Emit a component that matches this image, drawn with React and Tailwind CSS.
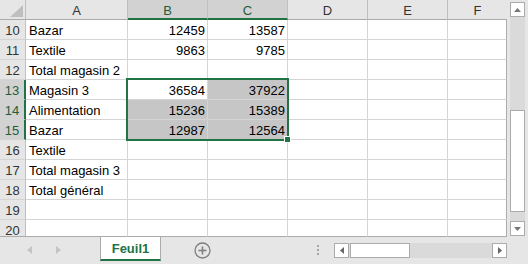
import React from 'react';

const COLS = [
  { k: 'A', w: 'w-[102px]' },
  { k: 'B', w: 'w-[80px]' },
  { k: 'C', w: 'w-[80px]' },
  { k: 'D', w: 'w-[80px]' },
  { k: 'E', w: 'w-[80px]' },
  { k: 'F', w: 'w-[59px]' },
];

const ROWS = [
  { n: 10, a: 'Bazar', b: '12459', c: '13587' },
  { n: 11, a: 'Textile', b: '9863', c: '9785' },
  { n: 12, a: 'Total magasin 2' },
  { n: 13, a: 'Magasin 3', b: '36584', c: '37922' },
  { n: 14, a: 'Alimentation', b: '15236', c: '15389' },
  { n: 15, a: 'Bazar', b: '12987', c: '12564' },
  { n: 16, a: 'Textile' },
  { n: 17, a: 'Total magasin 3' },
  { n: 18, a: 'Total général' },
  { n: 19 },
  { n: 20 },
];

function HeaderRow() {
  return (
    <div className="flex h-[20px]">
      <div className="relative w-[26px] h-[20px] shrink-0 bg-[#e6e6e6] border-r border-b border-r-[#bfbfbf] border-b-[#ababab]">
        <svg className="absolute left-0 top-0" width="25" height="19" viewBox="0 0 25 19">
          <polygon points="23,5 23,17 10,17" fill="#bfbfbf" />
        </svg>
      </div>
      {COLS.map((c) => {
        const sel = c.k === 'B' || c.k === 'C';
        const last = c.k === 'F';
        return (
          <div
            key={c.k}
            className={`${c.w} h-[20px] shrink-0 ${last ? '' : 'border-r border-r-[#bfbfbf]'} ${
              sel
                ? 'bg-[#d2d2d2] border-b-2 border-b-[#217346] text-[#1f5c3a]'
                : 'bg-[#e6e6e6] border-b border-b-[#ababab] text-[#333333]'
            }`}
          >
            <div className="h-[19px] pt-[2px] leading-[17px] text-center">{c.k}</div>
          </div>
        );
      })}
    </div>
  );
}

function Row({ r }) {
  const last = r.n === 20;
  const selRow = r.n >= 13 && r.n <= 15;
  const h = last ? 'h-[17px]' : 'h-[20px]';
  const bb = last ? 'border-b-[#ababab]' : 'border-b-[#d4d4d4]';
  const inner = 'h-[19px] pt-[2px] leading-[17px] whitespace-nowrap';
  return (
    <div className={`flex ${h}`}>
      <div
        className={`w-[26px] ${h} shrink-0 overflow-hidden border-b ${bb} ${
          selRow
            ? 'bg-[#d2d2d2] border-r-2 border-r-[#217346] text-[#1f5c3a]'
            : 'bg-[#e6e6e6] border-r border-r-[#bfbfbf] text-[#333333]'
        }`}
      >
        <div className={`${inner} text-center`}>{r.n}</div>
      </div>
      {COLS.map((c) => {
        const isB = c.k === 'B';
        const isC = c.k === 'C';
        const gray = selRow && (isC || (isB && r.n !== 13));
        const val = c.k === 'A' ? r.a : isB ? r.b : isC ? r.c : null;
        const br = c.k === 'F' ? 'border-r-[#ababab]' : 'border-r-[#d4d4d4]';
        return (
          <div
            key={c.k}
            className={`${c.w} ${h} shrink-0 border-r border-b ${br} ${bb} ${
              gray ? 'bg-[#c6c6c6]' : 'bg-white'
            } ${last ? 'overflow-hidden' : 'overflow-visible'}`}
          >
            {val ? (
              <div className={`${inner} ${c.k === 'A' ? 'pl-[3px] text-left' : 'pr-[2px] text-right'} text-black`}>
                {val}
              </div>
            ) : null}
          </div>
        );
      })}
    </div>
  );
}

function VScroll() {
  return (
    <div className="w-[21px] h-[237px] shrink-0 bg-[#e6e6e6] flex flex-col pl-[3px] pr-[3px]">
      <div className="mt-[2px] h-[15px] bg-white border border-[#ababab] flex items-center justify-center">
        <svg width="7" height="4" viewBox="0 0 7 4">
          <polygon points="0,4 7,4 3.5,0" fill="#777777" />
        </svg>
      </div>
      <div className="h-[204px] bg-[#dadada] flex flex-col">
        <div className="mt-[93px] h-[102px] bg-white border border-[#ababab]" />
      </div>
      <div className="h-[15px] bg-white border border-[#ababab] flex items-center justify-center">
        <svg width="7" height="4" viewBox="0 0 7 4">
          <polygon points="0,0 7,0 3.5,4" fill="#777777" />
        </svg>
      </div>
    </div>
  );
}

function TabBar() {
  return (
    <div className="flex h-[27px] bg-[#e6e6e6] items-start">
      <div className="w-[100px] h-[27px] shrink-0 relative">
        <svg className="absolute left-[27px] top-[9px]" width="5" height="8" viewBox="0 0 5 8">
          <polygon points="5,0 5,8 0,4" fill="#c4c4c4" />
        </svg>
        <svg className="absolute left-[56px] top-[9px]" width="5" height="8" viewBox="0 0 5 8">
          <polygon points="0,0 0,8 5,4" fill="#c4c4c4" />
        </svg>
      </div>
      <div className="w-[61px] h-[24px] shrink-0 bg-white border-l border-r border-[#ababab] border-b-2 border-b-[#217346] flex justify-center">
        <div className="pt-[3px] leading-[17px] text-[13px] font-bold text-[#217346]">Feuil1</div>
      </div>
      <div className="ml-[33px] mt-[5px] w-[17px] h-[17px] shrink-0">
        <svg width="17" height="17" viewBox="0 0 17 17">
          <circle cx="8.5" cy="8.5" r="7.5" fill="none" stroke="#7f7f7f" strokeWidth="1.3" />
          <line x1="4.5" y1="8.5" x2="12.5" y2="8.5" stroke="#7f7f7f" strokeWidth="1.6" />
          <line x1="8.5" y1="4.5" x2="8.5" y2="12.5" stroke="#7f7f7f" strokeWidth="1.6" />
        </svg>
      </div>
      <div className="ml-[106px] mt-[8px] w-[2px] flex flex-col gap-[2px] shrink-0">
        <div className="w-[2px] h-[2px] bg-[#a6a6a6]" />
        <div className="w-[2px] h-[2px] bg-[#a6a6a6]" />
        <div className="w-[2px] h-[2px] bg-[#a6a6a6]" />
      </div>
      <div className="ml-[15px] mt-[6px] w-[173px] h-[15px] shrink-0 bg-[#dadada] flex">
        <div className="w-[15px] h-[15px] bg-white border border-[#ababab] flex items-center justify-center">
          <svg width="4" height="7" viewBox="0 0 4 7">
            <polygon points="4,0 4,7 0,3.5" fill="#666666" />
          </svg>
        </div>
        <div className="ml-[1px] w-[60px] h-[15px] bg-white border border-[#ababab]" />
        <div className="flex-1" />
        <div className="w-[15px] h-[15px] bg-white border border-[#ababab] flex items-center justify-center">
          <svg width="4" height="7" viewBox="0 0 4 7">
            <polygon points="0,0 0,7 4,3.5" fill="#666666" />
          </svg>
        </div>
      </div>
    </div>
  );
}

export default function App() {
  return (
    <div className="w-[528px] h-[264px] overflow-hidden bg-[#e6e6e6] flex flex-col font-['Liberation_Sans',Arial,sans-serif] text-[13px]">
      <div className="flex h-[237px]">
        <div className="relative w-[507px] h-[237px] shrink-0 flex flex-col bg-white">
          <HeaderRow />
          {ROWS.map((r) => (
            <Row key={r.n} r={r} />
          ))}
          <div className="absolute left-[126px] top-[78px] w-[163px] h-[63px] border-2 border-[#217346] pointer-events-none" />
          <div className="absolute left-[284px] top-[136px] w-[7px] h-[7px] bg-[#217346] border border-white pointer-events-none" />
        </div>
        <VScroll />
      </div>
      <TabBar />
    </div>
  );
}
